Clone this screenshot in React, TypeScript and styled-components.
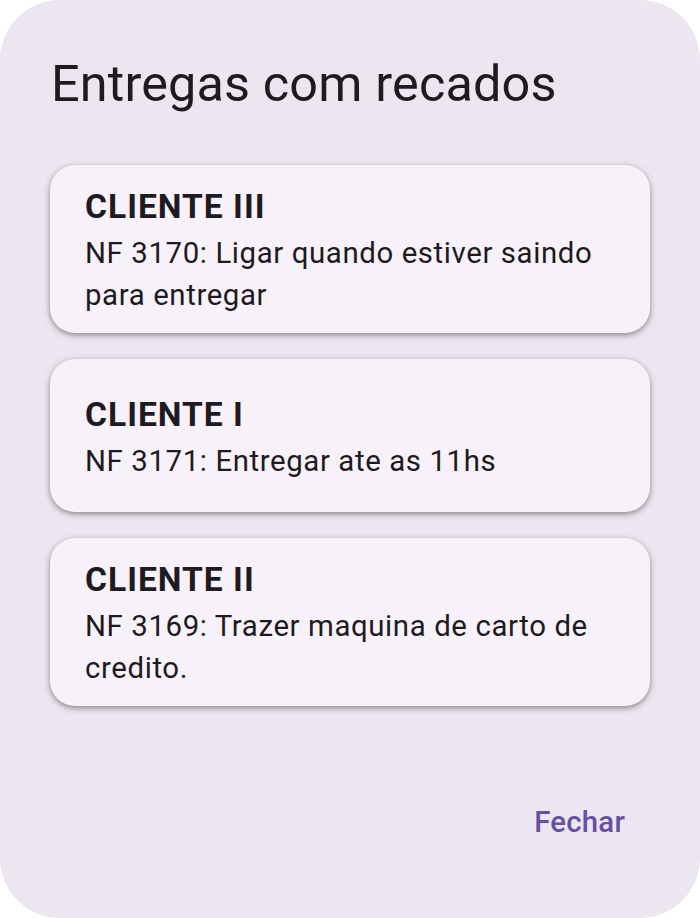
import React from 'react';
import styled, { createGlobalStyle } from 'styled-components';

const GlobalStyle = createGlobalStyle`
  html, body {
    margin: 0;
    padding: 0;
    background: #ffffff;
  }
  * {
    box-sizing: border-box;
  }
`;

const Dialog = styled.div`
  width: 700px;
  height: 918px;
  display: flex;
  flex-direction: column;
  padding: 50px 50px 54px 50px;
  background: #ece6f0;
  border-radius: 60px;
  font-family: Roboto, 'Noto Sans', sans-serif;
  color: #1d1b20;
`;

const Title = styled.h2`
  margin: 0 0 48px 1px;
  font-size: 50.4px;
  line-height: 67px;
  font-weight: 400;
  letter-spacing: 0.15px;
  color: #1d1b20;
`;

const List = styled.div`
  display: flex;
  flex-direction: column;
  gap: 26px;
`;

const Card = styled.div`
  min-height: 153px;
  display: flex;
  flex-direction: column;
  justify-content: center;
  padding: 17px 34px 17px 35px;
  background: #f7f2fa;
  border-radius: 25px;
  box-shadow: 0 2px 4px rgba(0, 0, 0, 0.28), 0 2px 6px 2px rgba(0, 0, 0, 0.12);
`;

const ClientName = styled.div`
  font-size: 33.6px;
  line-height: 50px;
  font-weight: 700;
  letter-spacing: 1px;
  color: #1d1b20;
`;

const Note = styled.div`
  font-size: 29.4px;
  line-height: 42px;
  font-weight: 400;
  letter-spacing: 0.6px;
  color: #1d1b20;
`;

const Actions = styled.div`
  margin-top: auto;
  display: flex;
  justify-content: flex-end;
`;

const TextButton = styled.button`
  height: 84px;
  padding: 0 25px;
  border: none;
  background: transparent;
  border-radius: 42px;
  font-family: Roboto, 'Noto Sans', sans-serif;
  font-size: 29.4px;
  font-weight: 500;
  letter-spacing: 0.2px;
  color: #6750a4;
  cursor: pointer;
`;

interface Recado {
  cliente: string;
  nota: string;
}

const recados: Recado[] = [
  { cliente: 'CLIENTE III', nota: 'NF 3170: Ligar quando estiver saindo para entregar' },
  { cliente: 'CLIENTE I', nota: 'NF 3171: Entregar ate as 11hs' },
  { cliente: 'CLIENTE II', nota: 'NF 3169: Trazer maquina de carto de credito.' },
];

export default function App(): React.ReactElement {
  return (
    <>
      <GlobalStyle />
      <Dialog>
        <Title>Entregas com recados</Title>
        <List>
          {recados.map((r) => (
            <Card key={r.cliente}>
              <ClientName>{r.cliente}</ClientName>
              <Note>{r.nota}</Note>
            </Card>
          ))}
        </List>
        <Actions>
          <TextButton>Fechar</TextButton>
        </Actions>
      </Dialog>
    </>
  );
}
